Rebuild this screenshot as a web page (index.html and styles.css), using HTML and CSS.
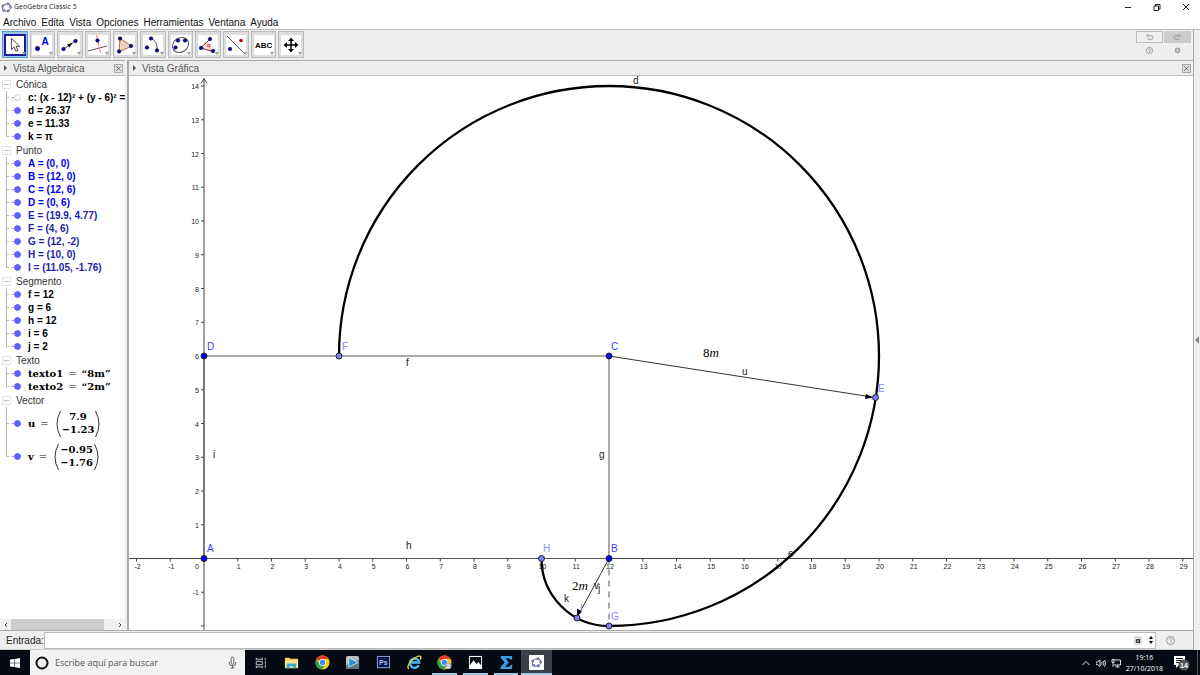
FILE: index.html
```
<!DOCTYPE html>
<html lang="es">
<head>
  <meta charset="UTF-8">
  <meta name="viewport" content="width=device-width, initial-scale=1.0">
  <title>GeoGebra Classic 5</title>
  <link rel="stylesheet" href="styles.css">
</head>
<body>
  <svg class="defs" aria-hidden="true">
    <defs>
      <symbol id="logo" viewBox="0 0 12 12">
        <ellipse cx="6" cy="6" rx="4.6" ry="3.8" transform="rotate(-20 6 6)" fill="none" stroke="#666" stroke-width="1"/>
        <g fill="#99f" stroke="#445" stroke-width=".6">
          <circle cx="7.6" cy="1.9" r="1.2"/><circle cx="10.5" cy="5.5" r="1.2"/><circle cx="8" cy="9.6" r="1.2"/>
          <circle cx="3" cy="9.1" r="1.2"/><circle cx="2" cy="4.4" r="1.2"/>
        </g>
      </symbol>
      <symbol id="chrome" viewBox="0 0 16 16">
        <circle cx="8" cy="8" r="7.5" fill="#fbc916"/>
        <path d="M8 8 1.5 4.2A7.5 7.5 0 0 1 14.5 4.3H8z" fill="#e33b2e"/>
        <path d="M1.5 4.2A7.5 7.5 0 0 0 7.4 15.5L11 9.8 8 8 5 9.8z" fill="#2f9e4f"/>
        <circle cx="8" cy="8" r="3.7" fill="#fff"/><circle cx="8" cy="8" r="2.9" fill="#4285f4"/>
      </symbol>
      <symbol id="close" viewBox="0 0 9 9"><path d="M1.5 1.5l6 6m0-6l-6 6" stroke="#555" fill="none"/></symbol>
      <symbol id="paren" viewBox="0 0 5 28" preserveAspectRatio="none"><path d="M4.5 1Q-2.5 14 4.5 27" stroke="#333" fill="none"/></symbol>
    </defs>
  </svg>

  <header class="titlebar">
    <svg class="app-icon"><use href="#logo"/></svg>
    <h1>GeoGebra Classic 5</h1>
    <div class="window-buttons">
      <button aria-label="Minimizar"><svg viewBox="0 0 10 10"><path d="M2 5.5h6"/></svg></button>
      <button aria-label="Restaurar"><svg viewBox="0 0 10 10"><path d="M2 4h4.500v4.500H2zM3.500 4V2.500H8V7H6.500"/></svg></button>
      <button aria-label="Cerrar"><svg viewBox="0 0 10 10"><path d="M2 2l6 6m0-6L2 8"/></svg></button>
    </div>
  </header>

  <nav class="menu">
    <a href="#">Archivo</a><a href="#">Edita</a><a href="#">Vista</a><a href="#">Opciones</a><a href="#">Herramientas</a><a href="#">Ventana</a><a href="#">Ayuda</a>
  </nav>

  <div class="workspace">
    <div class="app">
      <div class="toolbar">
        <div class="tools">
          <button class="tool selected" aria-label="Elige y mueve"><svg viewBox="0 0 20 20"><path d="M6 2.500v12.500l3-2.700 2 4.700 2.200-1-2-4.500h4z" fill="#fff" stroke="#333"/></svg></button>
          <button class="tool" aria-label="Punto"><svg viewBox="0 0 20 20"><circle class="pt" cx="5.500" cy="13.500" r="2.200"/><text x="9.500" y="10" class="tool-a">A</text></svg></button>
          <button class="tool" aria-label="Recta"><svg viewBox="0 0 20 20"><path d="M3 14.500L16 5.500" class="ln"/><path d="M7 9.500l5.500-1.500-3 4.500z"/><circle class="pt" cx="3.500" cy="14" r="1.800"/><circle class="pt" cx="15.500" cy="6" r="1.800"/></svg></button>
          <button class="tool" aria-label="Perpendicular"><svg viewBox="0 0 20 20"><path d="M0 16L19 11" class="ln"/><path d="M8.500 0l4 18" stroke="#f77" fill="none"/><circle class="pt" cx="9.500" cy="5.500" r="1.800"/></svg></button>
          <button class="tool" aria-label="Polígono"><svg viewBox="0 0 20 20"><path d="M5 3.500L16.500 11 4 17z" fill="#f2d2bf" stroke="#a64"/><circle class="pt" cx="5" cy="3.500" r="1.800"/><circle class="pt" cx="16" cy="11" r="1.800"/><circle class="pt" cx="4" cy="16.500" r="1.800"/></svg></button>
          <button class="tool" aria-label="Circunferencia"><svg viewBox="0 0 20 20"><path d="M8 3.500Q15 6 14 16" class="ln"/><circle class="pt" cx="8" cy="3.500" r="1.800"/><circle class="pt" cx="4" cy="12.500" r="1.800"/><circle class="pt" cx="14" cy="15.500" r="1.800"/></svg></button>
          <button class="tool" aria-label="Elipse"><svg viewBox="0 0 20 20"><ellipse cx="9.500" cy="10" rx="8.500" ry="7" transform="rotate(-35 9.500 10)" class="ln"/><circle class="pt" cx="7" cy="5.500" r="1.800"/><circle class="pt" cx="14" cy="5.500" r="1.800"/><circle class="pt" cx="4.500" cy="12.500" r="1.800"/></svg></button>
          <button class="tool" aria-label="Ángulo"><svg viewBox="0 0 20 20"><path d="M3 13l5-6q5 3 4 9z" fill="#fdd" stroke="#f88"/><path d="M12.500 3.500L3 13l12 3.500" class="ln"/><text x="9" y="12" class="alpha">α</text><circle class="pt" cx="12" cy="4" r="1.800"/><circle class="pt" cx="3" cy="13" r="1.800"/><circle class="pt" cx="15" cy="16" r="1.800"/></svg></button>
          <button class="tool" aria-label="Simetría"><svg viewBox="0 0 20 20"><path d="M1 1l18 18" class="ln"/><circle cx="15" cy="5.500" r="1.800" fill="#c00"/><circle class="pt" cx="4" cy="14" r="1.800"/></svg></button>
          <button class="tool" aria-label="Texto"><svg viewBox="0 0 20 20"><text x="1" y="13" class="abc">ABC</text></svg></button>
          <button class="tool" aria-label="Desplaza vista"><svg viewBox="0 0 20 20"><path d="M10 5v10M5 10h10" stroke="#000" stroke-width="1.500"/><path d="M10 2.500l3 3.500H7zM10 17.500l3-3.500H7zM2.500 10L6 7v6zM17.500 10L14 7v6z"/></svg></button>
        </div>
        <div class="quick">
          <button class="undo" aria-label="Deshacer"><svg viewBox="0 0 10 10"><path d="M2 3h5q2 0 2 2t-2 2H3M4 1L2 3l2 2"/></svg></button>
          <button class="redo" aria-label="Rehacer"><svg viewBox="0 0 10 10"><path d="M8 3H3Q1 3 1 5t2 2h4M6 1l2 2-2 2"/></svg></button>
          <button class="plain" aria-label="Ayuda"><svg viewBox="0 0 10 10"><circle cx="5" cy="5" r="3.500"/><path d="M3.500 4.500q1.500-2.500 3 0L5 5.500v2"/></svg></button>
          <button class="plain" aria-label="Preferencias"><svg viewBox="0 0 10 10"><circle cx="5" cy="5" r="2" stroke-width="1.500"/><path d="M5 1.500v1.500M5 7v1.500M1.500 5H3M7 5h1.500M2.500 2.500l1 1M6.500 6.500l1 1M7.500 2.500l-1 1M3.500 6.500l-1 1"/></svg></button>
        </div>
      </div>

      <main class="views">
        <section class="algebra">
          <div class="view-head"><span class="tri"></span><h2>Vista Algebraica</h2><button class="close" aria-label="Cerrar vista"><svg><use href="#close"/></svg></button></div>
          <div class="tree">
            <div class="group">
              <div class="group-head"><button aria-label="Contraer"></button>Cónica</div>
              <ul>
                <li><label><input type="checkbox">c: (x - 12)² + (y - 6)² =</label></li>
                <li><label><input type="checkbox" checked>d = 26.37</label></li>
                <li><label><input type="checkbox" checked>e = 11.33</label></li>
                <li><label><input type="checkbox" checked>k = π</label></li>
              </ul>
            </div>
            <div class="group">
              <div class="group-head"><button aria-label="Contraer"></button>Punto</div>
              <ul>
                <li class="free"><label><input type="checkbox" checked>A = (0, 0)</label></li>
                <li class="free"><label><input type="checkbox" checked>B = (12, 0)</label></li>
                <li class="free"><label><input type="checkbox" checked>C = (12, 6)</label></li>
                <li class="free"><label><input type="checkbox" checked>D = (0, 6)</label></li>
                <li class="bound"><label><input type="checkbox" checked>E = (19.9, 4.77)</label></li>
                <li class="bound"><label><input type="checkbox" checked>F = (4, 6)</label></li>
                <li class="bound"><label><input type="checkbox" checked>G = (12, -2)</label></li>
                <li class="bound"><label><input type="checkbox" checked>H = (10, 0)</label></li>
                <li class="bound"><label><input type="checkbox" checked>I = (11.05, -1.76)</label></li>
              </ul>
            </div>
            <div class="group">
              <div class="group-head"><button aria-label="Contraer"></button>Segmento</div>
              <ul>
                <li><label><input type="checkbox" checked>f = 12</label></li>
                <li><label><input type="checkbox" checked>g = 6</label></li>
                <li><label><input type="checkbox" checked>h = 12</label></li>
                <li><label><input type="checkbox" checked>i = 6</label></li>
                <li><label><input type="checkbox" checked>j = 2</label></li>
              </ul>
            </div>
            <div class="group">
              <div class="group-head"><button aria-label="Contraer"></button>Texto</div>
              <ul class="latex">
                <li><label><input type="checkbox" checked>texto1 <i>=</i> “8m”</label></li>
                <li><label><input type="checkbox" checked>texto2 <i>=</i> “2m”</label></li>
              </ul>
            </div>
            <div class="group">
              <div class="group-head"><button aria-label="Contraer"></button>Vector</div>
              <ul class="latex vectors">
                <li><label><input type="checkbox" checked>u <i>=</i>
                  <span class="matrix"><svg><use href="#paren"/></svg><span><span>7.9</span><span>−1.23</span></span><svg class="flip"><use href="#paren"/></svg></span></label></li>
                <li><label><input type="checkbox" checked>v <i>=</i>
                  <span class="matrix"><svg><use href="#paren"/></svg><span><span>−0.95</span><span>−1.76</span></span><svg class="flip"><use href="#paren"/></svg></span></label></li>
              </ul>
            </div>
          </div>
          <div class="scrollbar">
            <button aria-label="Izquierda"><svg viewBox="0 0 10 10"><path d="M6 3L4 5l2 2"/></svg></button>
            <div class="track"><div class="thumb"></div></div>
            <button aria-label="Derecha"><svg viewBox="0 0 10 10"><path d="M4 3l2 2-2 2"/></svg></button>
          </div>
        </section>

        <section class="graphics">
          <div class="view-head"><span class="tri"></span><h2>Vista Gráfica</h2><button class="close" aria-label="Cerrar vista"><svg><use href="#close"/></svg></button></div>
          <div class="canvas">
            <svg class="plot">
              <!-- origin at A, one unit = 33.75px -->
              <g transform="translate(75 482.5)">
                <g id="ticks"></g>
                <path class="axis" d="M-75 0H1116M0 148V-480"/>
                <path class="arrow" d="M-3-475L0-480l3 5M1112-3l4 3-4 3"/>
                <path class="segment" d="M0 0V-202.500H405V0z"/>
                <path class="segment dashed" d="M405 0V67.500"/>
                <path class="curve" d="M337.500 0A67.500 67.500 0 0 0 405 67.500A270 270 0 1 0 135-202.500"/>
                <path class="vector" d="M405-202.500L671-161M405 0L373 59"/>
                <path d="M669-161l-8 1.500 1-5zM373 58l0-8 5 3z"/>
                <g class="point free-point">
                  <circle cx="0" cy="0" r="3"/><circle cx="405" cy="0" r="3"/>
                  <circle cx="405" cy="-202.500" r="3"/><circle cx="0" cy="-202.500" r="3"/>
                </g>
                <g class="point bound-point">
                  <circle cx="671.500" cy="-161" r="3"/><circle cx="135" cy="-202.500" r="3"/><circle cx="405" cy="67.500" r="3"/>
                  <circle cx="337.500" cy="0" r="3"/><circle cx="373" cy="59.500" r="3"/>
                </g>
                <g class="names free-name">
                  <text x="3" y="-7">A</text><text x="407" y="-7">B</text><text x="407" y="-209">C</text><text x="3" y="-209">D</text>
                </g>
                <g class="names bound-name">
                  <text x="674" y="-167">E</text><text x="138" y="-209">F</text><text x="407" y="61">G</text><text x="339" y="-7">H</text><text x="376" y="53">I</text>
                </g>
                <g class="names">
                  <text x="429" y="-475">d</text><text x="584" y="-2">e</text><text x="202" y="-193">f</text><text x="395" y="-101">g</text>
                  <text x="202" y="-10">h</text><text x="9" y="-101">i</text><text x="394" y="33">j</text><text x="360" y="43">k</text>
                  <text x="538" y="-184">u</text><text x="390" y="30">v</text>
                </g>
                <g class="math">
                  <text x="499" y="-202">8<tspan>m</tspan></text><text x="368" y="31">2<tspan>m</tspan></text>
                </g>
              </g>
            </svg>
          </div>
        </section>
      </main>

      <form class="inputbar">
        <label for="entrada">Entrada:</label>
        <div class="field">
          <input id="entrada" type="text">
          <button type="button" class="alpha-btn">α</button>
          <button type="button" class="spin" aria-label="Historial"><svg viewBox="0 0 6 10"><path d="M3 1l2 3H1zM3 9L1 6h4z"/></svg></button>
        </div>
        <button type="button" class="help">?</button>
      </form>
    </div>
    <aside class="rail"><button aria-label="Mostrar barra"></button></aside>
  </div>

  <footer class="taskbar">
    <button class="start" aria-label="Inicio"><svg viewBox="0 0 12 12"><path d="M1 2.500L5.500 2v3.700H1zM6 1.900L11 1v4.700H6zM1 6.200h4.500V10L1 9.500zM6 6.200h5V11l-5-.8z" fill="#fff"/></svg></button>
    <div class="search">
      <svg class="cortana" viewBox="0 0 14 14"><circle cx="7" cy="7" r="5.500" fill="none" stroke="#111" stroke-width="2"/></svg>
      <input type="text" placeholder="Escribe aquí para buscar" aria-label="Escribe aquí para buscar">
      <svg class="mic" viewBox="0 0 10 14"><rect x="3.500" y="1" width="3" height="8" rx="1.500"/><path d="M1.500 6.500v2q0 2 3.500 2t3.500-2v-2M5 10.500V13M3 13h4"/></svg>
    </div>
    <button class="taskview" aria-label="Vista de tareas"><svg viewBox="0 0 14 14"><path d="M1 2.500h8M1 11.500h8M1.500 5h7v4h-7zM1.500 1v2M8.500 1v2M1.500 11v2M8.500 11v2M12 1v3M12 9v4M12 5v3" fill="none" stroke="#ddd"/></svg></button>
    <div class="apps">
      <button aria-label="Explorador"><svg viewBox="0 0 16 16"><path d="M1 3h5l1 1h8v10H1z" fill="#f5cf63"/><path d="M1 6h14v7H1z" fill="#fde494"/><path d="M3 14.500V9h10v5.500h-3V12H6v2.500z" fill="#2fa8e0"/></svg></button>
      <button aria-label="Chrome"><svg><use href="#chrome"/></svg></button>
      <button aria-label="Reproductor"><svg viewBox="0 0 16 16"><rect x="1" y="1" width="14" height="14" rx="2" fill="#b4bdc2"/><path d="M1 11l14-6v8q0 2-2 2H3q-2 0-2-2z" fill="#66737a"/><path d="M4 3l10 5-10 5z" fill="#2b8dd0" stroke="#dff" stroke-width=".8"/></svg></button>
      <button aria-label="Photoshop"><svg viewBox="0 0 16 16"><rect x="1.500" y="1.500" width="13" height="12" fill="#0a1648" stroke="#8aa8ee"/><text x="3.500" y="10.500" class="ps">Ps</text></svg></button>
      <button aria-label="Internet Explorer"><svg viewBox="0 0 16 16"><path d="M12.500 11A5 5 0 1 1 13 8H4.500" fill="none" stroke="#46baf0" stroke-width="2.600"/><path d="M2 15Q-1 12 5 6T14.500 1.500Q15.500 3 14 5" fill="none" stroke="#f5ca38" stroke-width="1.400"/></svg></button>
      <button class="open" aria-label="Chrome perfil"><svg viewBox="0 0 16 16"><use href="#chrome"/><circle cx="12" cy="11.500" r="3.500" fill="#aaa"/><circle cx="12" cy="10.500" r="1.200" fill="#eee"/><path d="M9.500 14q2.500-4 5 0z" fill="#eee"/></svg></button>
      <button class="open" aria-label="Fotos"><svg viewBox="0 0 16 16"><rect x="1" y="1" width="14" height="14" fill="#fff"/><path d="M2 2h12v9l-3-3.500-2 2L6 5.500 2 11z" fill="#0a0d14"/></svg></button>
      <button class="open" aria-label="Sigma"><svg viewBox="0 0 16 16"><path d="M2 1h12v4h-1.500L11 3.500H7L10.500 8 6.500 12.500H11l2-2h1.500L13.500 15H1.500v-2L6 8 2 3z" fill="#3b9cec"/></svg></button>
      <button class="open current" aria-label="GeoGebra"><svg viewBox="0 0 16 16"><rect x="0" y="0" width="16" height="16" fill="#fff"/><use href="#logo" x="2" y="2" width="12" height="12"/></svg></button>
    </div>
    <div class="tray">
      <svg viewBox="0 0 10 10"><path d="M1.500 7L5 3.500 8.500 7"/></svg>
      <svg viewBox="0 0 10 10"><path d="M0 4h1.500L4 2v6.500L1.500 6.500H0zM5.500 4q1 1.300 0 2.500M7 3q2 2.300 0 4.500M8.500 2q2.500 3.300 0 6.500"/></svg>
      <svg viewBox="0 0 10 10"><path d="M3 2h6.500v5H3M1 1.500v3h2v-3zM2 4.500V9M4.500 9h4M6.500 7v2"/></svg>
      <div class="clock"><time>19:16</time><time>27/10/2018</time></div>
      <button class="notes" aria-label="Notificaciones"><svg viewBox="0 0 18 18"><path d="M1 2h11v9H6l-3 3v-3H1z" fill="#fff"/><path d="M3 4.500h7M3 6.500h7M3 8.500h5" stroke="#222" fill="none"/><circle cx="11" cy="11" r="5.500" fill="#555"/><text x="7" y="14">14</text></svg></button>
    </div>
  </footer>

  <script>
    const unit = 33.75;
    const ticks = document.getElementById("ticks");

    function add(name, attrs, text) {
      const el = document.createElementNS("http://www.w3.org/2000/svg", name);
      for (const key in attrs) el.setAttribute(key, attrs[key]);
      if (text !== undefined) el.textContent = text;
      ticks.appendChild(el);
    }

    for (let x = -2; x <= 29; x++) {
      if (x === 0) continue;
      add("path", { d: `M${x * unit} 0v3`, class: "tick" });
      add("text", { x: x * unit + 1, y: 10, class: "tick-x" }, x);
    }
    add("text", { x: -7, y: 10, class: "tick-x" }, 0);

    for (let y = -2; y <= 14; y++) {
      if (y === 0) continue;
      add("path", { d: `M-3 ${-y * unit}h3`, class: "tick" });
      if (y > -2) add("text", { x: -5, y: -y * unit + 3, class: "tick-y" }, y);
    }
  </script>
</body>
</html>
```
FILE: styles.css
```
* {
  box-sizing: border-box;
}

body {
  margin: 0;
  height: 100vh;
  display: flex;
  flex-direction: column;
  overflow: hidden;
  background-color: #fff;
  color: #222;
  font: 10px/13px "Liberation Sans", Arial, sans-serif;
}

button,
input {
  font: inherit;
  margin: 0;
  padding: 0;
  border: none;
  background: none;
}

button {
  display: flex;
  align-items: center;
  justify-content: center;
}

h1,
h2 {
  margin: 0;
  font-size: 10px;
  font-weight: normal;
}

.defs {
  position: absolute;
  width: 0;
  height: 0;
}

/* title and menu */
.titlebar {
  display: flex;
  align-items: center;
  height: 14px;
  padding-left: 1px;
}

.titlebar h1 {
  font: 7px/14px "Open Sans", sans-serif;
}

.app-icon {
  width: 11px;
  height: 11px;
  margin-right: 2px;
}

.window-buttons {
  display: flex;
  margin-left: auto;
}

.window-buttons button {
  width: 29px;
}

.window-buttons svg {
  width: 10px;
  height: 10px;
  fill: none;
  stroke: #222;
}

.menu {
  display: flex;
  gap: 5px;
  height: 15px;
  padding: 2px 3px 0;
}

.menu a {
  color: #111;
  text-decoration: none;
}

.workspace {
  display: flex;
  flex: 1;
  min-height: 0;
  background-color: #eee;
  border-top: 1px solid #bbb;
}

.app {
  display: flex;
  flex-direction: column;
  flex: 1;
  min-width: 0;
}

.rail {
  display: flex;
  align-items: center;
  width: 7px;
  border-left: 1px solid #aaa;
}

.rail button {
  margin-left: 1px;
  border: 4px solid transparent;
  border-left: none;
  border-right: 4px solid #888;
}

/* toolbar */
.toolbar {
  display: flex;
  justify-content: space-between;
  height: 30px;
  padding: 1px 2px;
}

.tools {
  display: grid;
  grid-template-columns: repeat(11, 1fr);
  gap: 2px;
  width: 302px;
  height: 27px;
}

.tool {
  position: relative;
  background-color: #ddd;
  border: 1px solid #bbb;
}

.tool svg {
  width: 20px;
  height: 20px;
  background-color: #fff;
}

.tool::after {
  content: "";
  position: absolute;
  right: 1px;
  bottom: 2px;
  border: 2px solid transparent;
  border-top: 3px solid #999;
  border-bottom: none;
}

.tool.selected {
  background-color: #9cc8ea;
  border-color: #5b9bd0;
}

.tool.selected svg {
  width: 22px;
  height: 22px;
  border: 2px solid #1c1c9c;
}

.pt {
  fill: #0000c0;
  stroke: #000;
  stroke-width: 0.5;
}

.ln {
  fill: none;
  stroke: #555;
}

.tool-a {
  font: bold 10px "Liberation Sans", sans-serif;
  fill: #00f;
}

.alpha {
  font: bold 6px "Liberation Sans", sans-serif;
  fill: #e33;
}

.abc {
  font: bold 8px "Liberation Sans", sans-serif;
}

.quick {
  display: grid;
  grid-template-columns: 27px 27px;
  grid-template-rows: 12px 12px;
  gap: 1px;
}

.quick svg {
  width: 9px;
  height: 9px;
  fill: none;
  stroke: #999;
}

.undo {
  border: 1px solid #bbb;
}

.redo {
  background-color: #ccc;
}

/* views */
.views {
  display: flex;
  flex: 1;
  min-height: 0;
}

.algebra {
  display: flex;
  flex-direction: column;
  width: 125px;
}

.graphics {
  display: flex;
  flex-direction: column;
  flex: 1;
  min-width: 0;
  margin-left: 2px;
  border-left: 2px solid #aaa;
}

.view-head {
  display: flex;
  align-items: center;
  height: 16px;
  padding: 0 2px 0 4px;
  border-top: 1px solid #aaa;
  border-bottom: 1px solid #bbb;
}

.view-head h2 {
  color: #555;
}

.tri {
  width: 3px;
  margin-right: 6px;
  border: 3px solid transparent;
  border-left: 3px solid #555;
  border-right: none;
}

.close {
  width: 9px;
  height: 9px;
  margin-left: auto;
  background-color: #ddd;
  border: 1px solid #aaa;
}

.close svg {
  width: 9px;
  height: 9px;
}

.tree {
  flex: 1;
  overflow: hidden;
  padding-top: 1px;
  background-color: #fff;
}

.group-head {
  display: flex;
  align-items: center;
  height: 14px;
  color: #333;
}

.group-head button {
  width: 9px;
  height: 9px;
  margin: 0 5px 0 2px;
  border: 1px solid #e4e4e4;
  border-radius: 1px;
}

.group-head button::before {
  content: "";
  width: 5px;
  border-top: 1px solid #bbb;
}

.tree ul {
  list-style: none;
  margin: 0;
  padding: 0;
  color: #000;
  font-weight: bold;
}

.tree li {
  display: flex;
  height: 13px;
  margin-left: 6px;
  white-space: nowrap;
  background: linear-gradient(#bbb, #bbb) 0 0 / 1px 100% no-repeat;
}

.tree li:last-child {
  background-size: 1px 50%;
}

.tree li::before {
  content: "";
  flex: none;
  align-self: center;
  width: 8px;
  border-top: 1px dashed #bbb;
}

.tree label {
  display: flex;
  flex: none;
  align-items: center;
}

.tree input {
  appearance: none;
  flex: none;
  width: 7px;
  height: 7px;
  margin-right: 7px;
  border: 1px solid #ccc;
  border-radius: 50%;
}

.tree input:checked {
  background-color: #6060ff;
  border-color: #6060ff;
}

.tree .free {
  color: #0000f0;
}

.tree .bound {
  color: #2323a8;
}

.tree .latex {
  font: bold 10px/13px "DejaVu Serif", serif;
}

.latex i {
  margin: 0 5px;
  font-weight: normal;
  font-style: normal;
}

.vectors li {
  height: 33px;
}

.matrix {
  display: flex;
  gap: 1px;
  margin-left: 2px;
}

.matrix > span {
  display: flex;
  flex-direction: column;
  text-align: center;
}

.matrix svg {
  width: 5px;
  height: 28px;
}

.flip {
  transform: scaleX(-1);
}

.scrollbar {
  display: flex;
  height: 11px;
  background-color: #f0f0f0;
}

.scrollbar button {
  width: 11px;
}

.scrollbar svg {
  width: 10px;
  height: 10px;
  fill: none;
  stroke: #444;
}

.track {
  flex: 1;
}

.thumb {
  width: 90%;
  height: 100%;
  background-color: #cdcdcd;
}

/* graphics view */
.canvas {
  flex: 1;
  min-height: 0;
  background-color: #fff;
}

.plot {
  display: block;
  width: 100%;
  height: 100%;
}

.axis,
.arrow,
.tick {
  fill: none;
  stroke: #444;
}

.tick-x,
.tick-y {
  font-size: 7px;
  fill: #222;
}

.tick-x {
  text-anchor: middle;
}

.tick-y {
  text-anchor: end;
}

.segment {
  fill: none;
  stroke: #555;
}

.dashed {
  stroke-dasharray: 6 5;
}

.curve {
  fill: none;
  stroke: #000;
  stroke-width: 2.3;
}

.vector {
  fill: none;
  stroke: #333;
}

.point {
  stroke: #222;
  stroke-width: 1;
}

.free-point {
  fill: #00f;
}

.bound-point {
  fill: #7d7dff;
}

.names {
  font-size: 10px;
  fill: #222;
}

.free-name {
  fill: #4040ff;
}

.bound-name {
  fill: #8c8cff;
}

.math {
  font: 13px "Liberation Serif", serif;
}

.math tspan {
  font-style: italic;
}

/* input bar */
.inputbar {
  display: flex;
  align-items: center;
  height: 20px;
  padding-left: 6px;
  border-top: 1px solid #aaa;
  border-bottom: 1px solid #ccc;
}

.field {
  display: flex;
  flex: 1;
  height: 17px;
  background-color: #fff;
  border: 1px solid #bbb;
}

.field input {
  flex: 1;
  min-width: 0;
}

.alpha-btn {
  align-self: center;
  width: 8px;
  height: 9px;
  margin-right: 4px;
  background-color: #ddd;
  font: bold 8px/9px "Liberation Sans", sans-serif;
}

.spin {
  width: 9px;
}

.spin svg {
  width: 6px;
  height: 10px;
}

.help {
  width: 9px;
  height: 9px;
  margin: 0 18px 0 10px;
  border: 1px solid #999;
  border-radius: 50%;
  color: #888;
  font-size: 7px;
}

/* taskbar */
.taskbar {
  display: flex;
  height: 25px;
  background-color: #060a12;
  color: #fff;
}

.start {
  width: 30px;
}

.start svg {
  width: 12px;
  height: 12px;
}

.search {
  display: flex;
  align-items: center;
  width: 215px;
  padding: 0 8px 0 5px;
  background-color: #f2f2f2;
}

.cortana {
  width: 14px;
  height: 14px;
}

.search input {
  flex: 1;
  min-width: 0;
  margin-left: 6px;
  font: 9px/13px "Open Sans", sans-serif;
}

.search input::placeholder {
  color: #555;
  opacity: 1;
}

.mic {
  width: 9px;
  height: 13px;
  fill: none;
  stroke: #555;
}

.taskview {
  width: 31px;
}

.taskview svg {
  width: 12px;
  height: 12px;
}

.apps {
  display: flex;
  width: 276px;
}

.apps button {
  position: relative;
  flex: 1;
}

.apps svg {
  width: 15px;
  height: 15px;
}

.open::after {
  content: "";
  position: absolute;
  left: 3px;
  right: 3px;
  bottom: 0;
  height: 2px;
  background-color: #9fcbea;
}

.apps .current {
  background-color: #3b3f46;
}

.current::after {
  left: 0;
  right: 0;
}

.ps {
  font: bold 7px "Liberation Sans", sans-serif;
  fill: #b5caff;
}

.tray {
  display: flex;
  align-items: center;
  gap: 5px;
  margin-left: auto;
  margin-right: 2px;
  padding-right: 6px;
  border-right: 1px solid #555;
}

.tray > svg {
  width: 10px;
  height: 10px;
  fill: none;
  stroke: #ddd;
}

.clock {
  display: flex;
  flex-direction: column;
  align-items: center;
  font: 7px/11px "Open Sans", sans-serif;
}

.notes {
  margin-left: 5px;
}

.notes svg {
  width: 18px;
  height: 18px;
}

.notes text {
  font: bold 7px "Liberation Sans", sans-serif;
  fill: #fff;
}
```
